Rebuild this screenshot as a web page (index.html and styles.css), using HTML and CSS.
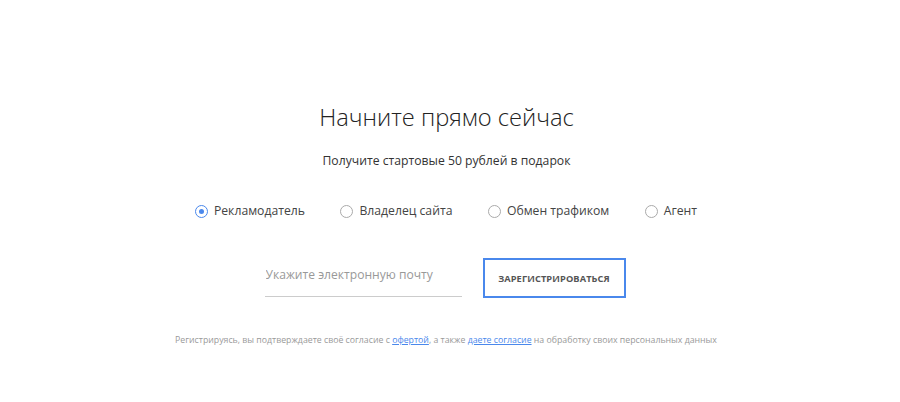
FILE: index.html
```html
<!DOCTYPE html>
<html lang="ru">
<head>
<meta charset="utf-8">
<title>Начните прямо сейчас</title>
<link rel="stylesheet" href="styles.css">
</head>
<body>
<main class="page">
  <h1 class="title">Начните прямо сейчас</h1>
  <p class="subtitle">Получите стартовые 50 рублей в подарок</p>
  <div class="roles">
    <label class="role"><span class="radio checked"></span>Рекламодатель</label>
    <label class="role"><span class="radio"></span>Владелец сайта</label>
    <label class="role"><span class="radio"></span>Обмен трафиком</label>
    <label class="role"><span class="radio"></span>Агент</label>
  </div>
  <form class="signup">
    <input class="email" type="text" placeholder="Укажите электронную почту">
    <button class="submit" type="button">Зарегистрироваться</button>
  </form>
  <p class="terms">Регистрируясь, вы подтверждаете своё согласие с <a href="#">офертой</a>, а также <a href="#">даете согласие</a> на обработку своих персональных данных</p>
</main>
</body>
</html>
```
FILE: styles.css
```css
* { box-sizing: border-box; }
html, body { margin: 0; padding: 0; background: #fff; }
body { font-family: "Open Sans", "Liberation Sans", sans-serif; color: #333; }
.page {
  width: 900px;
  height: 402px;
  display: flex;
  flex-direction: column;
  align-items: center;
  padding-top: 100px;
}
.title {
  margin: 0;
  font-size: 23.7px;
  font-weight: 300;
  line-height: 34px;
  color: #222;
  padding-right: 7px;
}
.subtitle {
  margin: 18px 0 0;
  font-size: 12.2px;
  line-height: 18px;
  color: #333;
  padding-right: 7px;
}
.roles {
  margin-top: 32px;
  display: flex;
  gap: 35.5px;
  padding-right: 8px;
}
.role {
  display: flex;
  align-items: center;
  font-size: 12.2px;
  line-height: 18px;
  color: #444;
}
.radio {
  width: 13px;
  height: 13px;
  border: 1px solid #aaa;
  border-radius: 50%;
  margin-right: 6px;
  display: flex;
  align-items: center;
  justify-content: center;
}
.radio.checked { border-color: #4a88ec; }
.radio.checked::after {
  content: "";
  width: 5px;
  height: 5px;
  border-radius: 50%;
  background: #4a88ec;
}
.signup {
  margin-top: 38px;
  display: flex;
  align-items: center;
  gap: 21px;
  padding-right: 10px;
}
.email {
  width: 197px;
  height: 40px;
  border: 0;
  border-bottom: 1px solid #ccc;
  font-family: inherit;
  font-size: 12.1px;
  color: #333;
  padding: 0 0 4px 1px;
  outline: none;
  margin-top: -2px;
}
.email::placeholder { color: #999; }
.submit {
  width: 143px;
  height: 40px;
  border: 2px solid #4a88ec;
  background: #fff;
  font-family: inherit;
  font-size: 9.25px;
  font-weight: 700;
  text-transform: uppercase;
  color: #555;
  letter-spacing: 0.1px;
}
.terms {
  margin: 36px 0 0;
  font-size: 8.76px;
  line-height: 12px;
  color: #999;
  padding-right: 8px;
}
.terms a { color: #4a88ec; text-decoration: underline; }
```
